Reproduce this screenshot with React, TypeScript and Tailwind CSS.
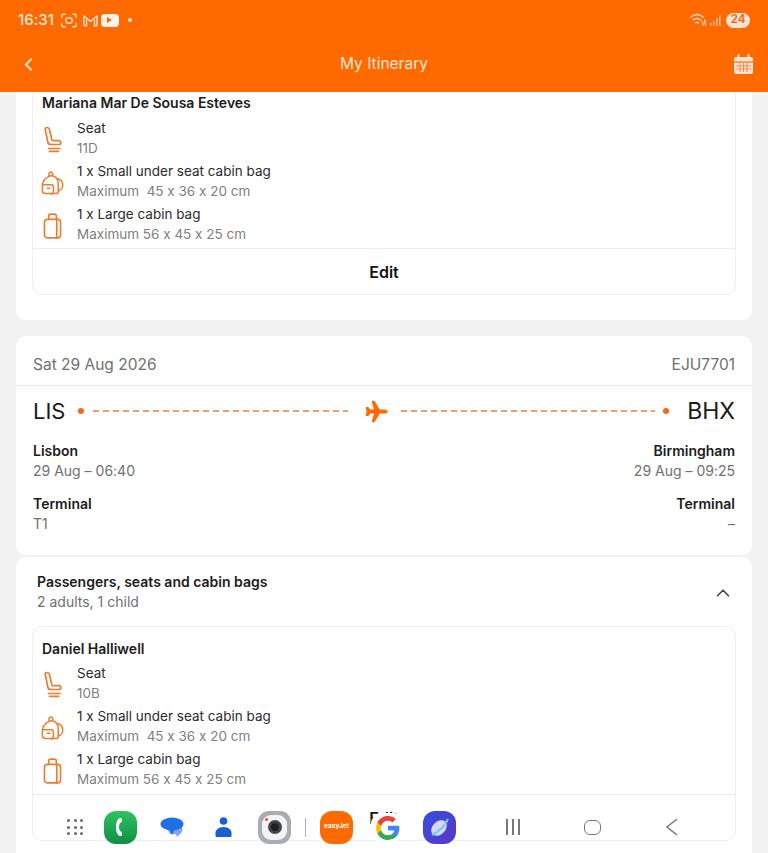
import type { ReactNode } from "react";
import { ChevronLeft, ChevronUp } from "lucide-react";

const font = { fontFamily: '"Inter", "Liberation Sans", sans-serif', fontFeatureSettings: '"calt" 0' };

function Seat() {
  return (
    <svg width="18" height="27" viewBox="0 0 18 27" fill="none" stroke="#ec7d30" strokeWidth="1.700" strokeLinecap="round" strokeLinejoin="round">
      <path d="M3 1.500c-1.500 0-2 1-1.700 2.500l2.500 12c.3 1.500 1.200 2.500 3 2.500h8c1.500 0 2-1 2-1.800s-.7-2-2-2H9c-.7 0-1-.4-1.200-1L5.500 3.500C5.200 2.200 4.500 1.500 3 1.500z" />
      <path d="M4.500 22.500h11.500M5.500 25.300h9" />
    </svg>
  );
}

function Backpack() {
  return (
    <svg width="25" height="28" viewBox="0 0 26 28" fill="none" stroke="#ec7d30" strokeWidth="1.700" strokeLinecap="round" strokeLinejoin="round">
      <path d="M8 7c1.500-1 5-1.500 7-.5 3 1.500 4.500 5 4.500 9v8c0 1.500-1 2.500-2.500 2.500H5c-2 0-3.500-1.500-3.500-3.500v-4C1.500 13 4 9 8 7z" />
      <path d="M9 6.500V3.800C9 2.500 10 1.500 11 1.500s2.200 1 2.200 2.300V6" />
      <path d="M2 16h10c1.200 0 2 .8 2 2v6c0 1.500-1 2.500-2.500 2.500" />
      <path d="M7 20h3" />
      <path d="M19 9c3 1 5.500 4 5.500 7.500S22 22.500 19.500 23" />
    </svg>
  );
}

function CabinBag() {
  return (
    <svg width="19" height="28" viewBox="0 0 20 28" fill="none" stroke="#ec7d30" strokeWidth="1.700" strokeLinecap="round" strokeLinejoin="round">
      <rect x="1.500" y="7" width="17" height="19.500" rx="3" />
      <path d="M6 7V3.500C6 2.300 6.900 1.500 8 1.500h4c1.100 0 2 .8 2 2V7" />
      <path d="M14.500 7v19.500" />
    </svg>
  );
}

function Row({ icon, a, b }: { icon: ReactNode; a: string; b: string }) {
  return (
    <div className="flex h-[43px] pl-[8px]">
      <div className="w-[36px] flex items-center justify-center pr-[13px]">{icon}</div>
      <div className="flex flex-col">
        <div className="h-[21px] leading-[21px] text-[13.500px] text-[#2b2b2b] whitespace-pre">{a}</div>
        <div className="h-[21px] -mt-[1px] leading-[21px] text-[13.500px] text-[#808080] whitespace-pre">{b}</div>
      </div>
    </div>
  );
}

function Passenger({ name, seat, nameClass, editClass }: { name: string; seat: string; nameClass: string; editClass: string }) {
  return (
    <div>
      <div className={`pl-[9px] flex items-center text-[14px] font-semibold text-[#1c1c1c] ${nameClass}`}>{name}</div>
      <div className="flex flex-col">
        <Row icon={<Seat />} a="Seat" b={seat} />
        <Row icon={<Backpack />} a="1 x Small under seat cabin bag" b="Maximum  45 x 36 x 20 cm" />
        <Row icon={<CabinBag />} a="1 x Large cabin bag" b="Maximum 56 x 45 x 25 cm" />
      </div>
      <div className={`border-t border-[#ececec] h-[46px] flex items-center justify-center text-[16px] font-semibold text-[#111] ${editClass}`}>Edit</div>
    </div>
  );
}

function Plane() {
  return (
    <svg width="23" height="23" viewBox="0 0 24 24" fill="#ff6a00" stroke="#ff6a00" strokeWidth="1.200" strokeLinejoin="round">
      <path d="M23 12c0-1-1.200-1.600-2.600-1.600h-5.300L9.700 1.500H7.600l2.500 8.900H5L3.200 8H1.300l1.100 4-1.100 4h1.900L5 13.600h5.100l-2.500 8.900h2.100l5.400-8.900h5.300C21.800 13.600 23 13 23 12z" />
    </svg>
  );
}

function Dash() {
  return <span className="flex-1 h-[2px] bg-[repeating-linear-gradient(to_right,#ec9e6b_0_6px,transparent_6px_10px)]" />;
}

function Col({ city, time, term, right }: { city: string; time: string; term: string; right?: boolean }) {
  return (
    <div className={right ? "text-right" : ""}>
      <div className="h-[21px] leading-[21px] font-semibold text-[#1c1c1c]">{city}</div>
      <div className="h-[21px] -mt-[1px] leading-[21px] text-[#707070]">{time}</div>
      <div className="h-[21px] leading-[21px] font-semibold text-[#1c1c1c] mt-[12px]">Terminal</div>
      <div className="h-[21px] -mt-[1px] leading-[21px] text-[#707070]">{term}</div>
    </div>
  );
}

function Flight() {
  return (
    <section className="bg-white rounded-[10px] mx-[16px] mt-[16px] h-[219px] shrink-0">
      <div className="flex items-center justify-between h-[50px] pt-[9px] px-[17px] border-b border-[#e9e9e9] text-[15.500px] text-[#707070]">
        <span>Sat 29 Aug 2026</span>
        <span>EJU7701</span>
      </div>
      <div className="flex items-center h-[50px] px-[17px]">
        <span className="text-[22px] text-[#1a1a1a] w-[45px]">LIS</span>
        <span className="w-[6px] h-[6px] rounded-full bg-[#f26a12] mr-[9px]" />
        <Dash />
        <span className="ml-[17px] mr-[13px]"><Plane /></span>
        <Dash />
        <span className="w-[6px] h-[6px] rounded-full bg-[#f26a12] ml-[8px] mr-[18px]" />
        <span className="text-[23px] text-[#1a1a1a]">BHX</span>
      </div>
      <div className="flex justify-between px-[17px] pt-[4px] text-[14px]">
        <Col city="Lisbon" time="29 Aug – 06:40" term="T1" />
        <Col city="Birmingham" time="29 Aug – 09:25" term="–" right />
      </div>
    </section>
  );
}

function Dock() {
  return (
    <div className="absolute left-0 right-0 bottom-0 h-[52px] flex items-center pl-[60px]">
      <div className="w-[30px] flex justify-center">
        <div className="grid grid-cols-3 gap-[3.500px]">
          {Array.from({ length: 9 }).map((_, i) => (
            <span key={i} className="w-[3px] h-[3px] rounded-full bg-[#6b6b6b]" />
          ))}
        </div>
      </div>
      <div className="ml-[14px] w-[33px] h-[33px] rounded-[12px] bg-gradient-to-b from-[#2fc35f] to-[#0d8f45] flex items-center justify-center">
        <svg width="14" height="22" viewBox="0 0 14 22" fill="#fff"><path d="M6 2c-3 1-4 5-4 9s1 8 4 9c1 .3 2-.3 2-1l-.5-3c-.1-.6-.7-1-1.300-.8-.8-1-1.200-2.700-1.200-4.200s.4-3.200 1.200-4.200c.6.200 1.200-.2 1.300-.8L8 3c0-.7-1-1.300-2-1z" /></svg>
      </div>
      <div className="ml-[22px] w-[26px] h-[26px] flex items-center justify-center">
        <svg width="24" height="24" viewBox="0 0 24 24"><path d="M8 12h14c1 3 0 6-2 7l-3 3-1-3h-5c-2 0-3-3-3-7z" fill="#7ea6ee" /><ellipse cx="12" cy="9" rx="11.500" ry="6.500" fill="#1f6fe5" /><path d="M9 14l3 6 3-6z" fill="#1f6fe5" /></svg>
      </div>
      <div className="ml-[27px] w-[22px] h-[26px] flex items-center justify-center">
        <svg width="17" height="20" viewBox="0 0 17 20" fill="#1a5fd0"><circle cx="8.500" cy="4" r="3.800" /><path d="M.5 19v-3c0-3 3-6 8-6s8 3 8 6v3c0 .5-.5 1-1 1H1.500c-.5 0-1-.5-1-1z" /></svg>
      </div>
      <div className="ml-[24px] w-[33px] h-[33px] rounded-[11px] bg-[#a9adb3] flex items-center justify-center relative">
        <span className="w-[25px] h-[25px] rounded-[9px] bg-[#f3f3f3] flex items-center justify-center">
          <span className="w-[14px] h-[14px] rounded-full bg-[#1e2024] border-[3px] border-[#41454c]" />
        </span>
        <span className="absolute left-[7px] top-[7px] w-[3px] h-[3px] rounded-full bg-[#e0504a]" />
      </div>
      <div className="ml-[14px] w-[1px] h-[19px] bg-[#b0b0b0]" />
      <div className="ml-[14px] w-[33px] h-[33px] rounded-[12px] bg-[#ff6a00] flex items-center justify-center text-[6.500px] font-bold text-white">easyJet</div>
      <div className="ml-[18px] mt-[1px] w-[33px] h-[29px] rounded-[11px] bg-white flex items-center justify-center">
        <svg width="26" height="26" viewBox="0 0 24 24">
          <path d="M22.500 12.200c0-.8-.1-1.500-.2-2.200H12v4.300h5.900c-.3 1.400-1 2.500-2.200 3.300v2.800h3.500c2.100-1.900 3.300-4.800 3.300-8.200z" fill="#4285f4" />
          <path d="M12 23c3 0 5.400-1 7.200-2.600l-3.500-2.800c-1 .7-2.200 1.100-3.700 1.100-2.900 0-5.300-1.900-6.200-4.500H2.200v2.800C4 20.600 7.700 23 12 23z" fill="#34a853" />
          <path d="M5.800 14.200c-.5-1.400-.5-3 0-4.400V7H2.200c-1.500 3-1.500 7 0 10z" fill="#fbbc05" />
          <path d="M12 5.400c1.600 0 3 .5 4.100 1.600l3.100-3.100C17.400 2.100 15 1 12 1 7.700 1 4 3.400 2.200 7l3.600 2.800C6.700 7.300 9.100 5.400 12 5.400z" fill="#ea4335" />
        </svg>
      </div>
      <div className="ml-[19px] w-[33px] h-[33px] rounded-[12px] bg-gradient-to-br from-[#2d4fe0] to-[#5a34c8] flex items-center justify-center">
        <svg width="24" height="24" viewBox="0 0 24 24" fill="none"><ellipse cx="11" cy="13" rx="6.500" ry="9" transform="rotate(45 11 13)" fill="#d9d6fb" /><path d="M4 20C10 17 17 11 20 4" stroke="#6fd0e8" strokeWidth="2" /></svg>
      </div>
      <div className="ml-[49px] w-[16px] flex justify-center gap-[4.500px]">
        <span className="w-[1.500px] h-[16px] bg-[#777]" /><span className="w-[1.500px] h-[16px] bg-[#777]" /><span className="w-[1.500px] h-[16px] bg-[#777]" />
      </div>
      <div className="ml-[63px] w-[17px] h-[15px] rounded-[6px] border-[1.500px] border-[#777]" />
      <div className="ml-[64px]">
        <svg width="13" height="18" viewBox="0 0 13 18" fill="none" stroke="#777" strokeWidth="1.500"><path d="M12 1L2 9l10 8" /></svg>
      </div>
    </div>
  );
}

export default function App() {
  return (
    <div style={font} className="w-[768px] h-[853px] relative overflow-hidden bg-[#f2f2f2] flex flex-col">
      <header className="h-[92px] shrink-0 bg-[#ff6a00] text-white">
        <div className="h-[40px] pl-[18px] pr-[18px] flex items-center text-[15px] font-medium text-[#ffe6d4]">
          <span>16:31</span>
          <svg className="ml-[7px]" width="16" height="15" viewBox="0 0 18 16" fill="none" stroke="#ffe6d4" strokeWidth="1.500"><path d="M1 5V2.500C1 1.600 1.600 1 2.500 1H5M13 1h2.500c.9 0 1.500.6 1.500 1.500V5M17 11v2.500c0 .9-.6 1.500-1.500 1.500H13M5 15H2.500C1.600 15 1 14.400 1 13.500V11" /><rect x="5.500" y="5" width="7" height="6" rx="2" /></svg>
          <svg className="ml-[6px]" width="15" height="13" viewBox="0 0 17 14" fill="none" stroke="#ffe6d4" strokeWidth="1.500"><path d="M1 13V2l7.500 6L16 2v11M1 13h3V6M16 13h-3V6" /></svg>
          <span className="ml-[3px] w-[18px] h-[13px] rounded-[4px] bg-[#fff3ea] flex items-center justify-center">
            <span className="w-0 h-0 border-y-[3px] border-y-transparent border-l-[5px] border-l-[#ff6a00]" />
          </span>
          <span className="ml-[9px] w-[4px] h-[4px] rounded-full bg-[#ffe6d4]" />
          <span className="flex-1" />
          <svg width="17" height="14" viewBox="0 0 18 14" fill="none" stroke="#ffd9c0" strokeWidth="1.500" strokeLinecap="round"><path d="M1 4c4-3.500 9-3.500 13 0M3.500 7c2.500-2 5.500-2 8 0M6 10c1-.8 2.200-.8 3.200 0M13 9l1 3M15.500 7l1 5" /></svg>
          <svg className="ml-[3px]" width="12" height="12" viewBox="0 0 12 12" fill="#ffb98c"><rect x="0" y="9" width="1.500" height="3" /><rect x="3" y="7" width="1.500" height="5" /><rect x="6" y="4" width="1.500" height="8" /><rect x="9" y="1" width="1.500" height="11" /></svg>
          <span className="ml-[4px] w-[24px] h-[15px] rounded-full bg-[#ffe3cf] text-[#e8641a] text-[11.500px] font-semibold flex items-center justify-center">24</span>
        </div>
        <div className="h-[48px] pl-[18px] pr-[14px] flex items-center justify-between relative">
          <ChevronLeft size={21} strokeWidth={2.200} color="#ffe6d4" />
          <span className="absolute left-0 right-0 text-center text-[15.500px] text-[#ffe6d4]">My Itinerary</span>
          <svg width="21" height="21" viewBox="0 0 21 21"><rect x="1" y="3" width="19" height="17" rx="2" fill="#ffe6d4" /><path d="M5.500 1v4M15.500 1v4" stroke="#ffe6d4" strokeWidth="2" strokeLinecap="round" /><path d="M1 8h19" stroke="#ff6a00" strokeWidth="1.200" /><path d="M3 12h15M3 15h15M7 9v9M10.500 9v9M14 9v9" stroke="#f08a48" strokeWidth="1" fill="none" /></svg>
        </div>
      </header>

      <section className="bg-white rounded-b-[10px] mx-[16px] px-[16px] h-[228px] shrink-0">
        <div className="border-x border-b border-[#efefef] rounded-b-[10px]">
          <Passenger name="Mariana Mar De Sousa Esteves" seat="11D" nameClass="h-[26px] pb-[5px]" editClass="mt-[1px]" />
        </div>
      </section>

      <Flight />

      <section className="bg-white rounded-t-[10px] mx-[16px] mt-[2px] flex-1 px-[16px]">
        <div className="relative h-[69px] pt-[14px] pl-[5px] text-[14px]">
          <div className="h-[21px] leading-[21px] font-semibold text-[#1c1c1c]">Passengers, seats and cabin bags</div>
          <div className="h-[21px] -mt-[1px] leading-[21px] text-[#707070]">2 adults, 1 child</div>
          <ChevronUp className="absolute right-[2px] top-[25px]" size={22} strokeWidth={1.800} color="#444" />
        </div>
        <div className="border border-[#efefef] rounded-[10px] pt-[6px]">
          <Passenger name="Daniel Halliwell" seat="10B" nameClass="h-[30px]" editClass="mt-[2px]" />
        </div>
      </section>

      <Dock />
    </div>
  );
}
